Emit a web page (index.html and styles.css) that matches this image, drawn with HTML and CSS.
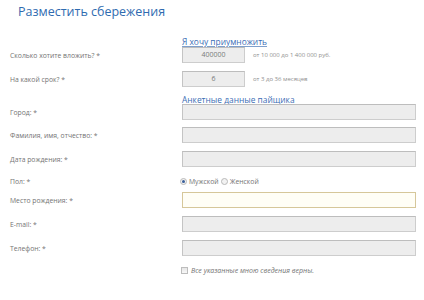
FILE: index.html
```html
<!DOCTYPE html>
<html lang="ru">
<head>
<meta charset="utf-8">
<title>Разместить сбережения</title>
<link rel="stylesheet" href="styles.css">
</head>
<body>
<div class="page">
  <h1 class="title">Разместить сбережения</h1>
  <form class="form">
    <div class="row section-row first"><span class="label"></span><span class="section">Я хочу приумножить</span></div>
    <div class="row"><span class="label">Сколько хотите вложить? *</span><div class="field"><span class="input short">400000</span><span class="hint">от 10 000 до 1 400 000 руб.</span></div></div>
    <div class="row gap8"><span class="label">На какой срок? *</span><div class="field"><span class="input short">6</span><span class="hint">от 3 до 36 месяцев</span></div></div>
    <div class="row section-row sec2"><span class="label"></span><span class="section">Анкетные данные пайщика</span></div>
    <div class="row"><span class="label">Город: *</span><div class="field"><span class="input wide"></span></div></div>
    <div class="row gap7"><span class="label">Фамилия, имя, отчество: *</span><div class="field"><span class="input wide"></span></div></div>
    <div class="row gap8"><span class="label">Дата рождения: *</span><div class="field"><span class="input wide"></span></div></div>
    <div class="row gap8 radio-row"><span class="label">Пол: *</span><div class="field radios"><span class="radio checked"></span><span class="opt">Мужской</span><span class="radio"></span><span class="opt">Женской</span></div></div>
    <div class="row gap5"><span class="label">Место рождения: *</span><div class="field"><span class="input wide focus"></span></div></div>
    <div class="row gap8"><span class="label">E-mail: *</span><div class="field"><span class="input wide"></span></div></div>
    <div class="row gap8"><span class="label">Телефон: *</span><div class="field"><span class="input wide"></span></div></div>
    <div class="row check-row"><span class="label"></span><div class="field"><span class="checkbox"></span><span class="agree">Все указанные мною сведения верны.</span></div></div>
  </form>
</div>
</body>
</html>
```

FILE: styles.css
```css
html, body {
  margin: 0;
  padding: 0;
  background: #ffffff;
}

.page {
  width: 424px;
  height: 300px;
  padding-top: 2px;
  box-sizing: border-box;
  font-family: "Open Sans", "DejaVu Sans", sans-serif;
  overflow: hidden;
}

.title {
  margin: 0 0 0 18px;
  font-size: 12.5px;
  line-height: 20px;
  font-weight: normal;
  color: #2f6bb0;
}

.form {
  display: flex;
  flex-direction: column;
  margin-top: 15px;
  padding-left: 10px;
}

.row {
  display: flex;
  align-items: center;
  height: 16px;
}

.row.gap8 { margin-top: 8px; }
.row.gap7 { margin-top: 7px; }
.row.gap5 { margin-top: 5px; }

.label {
  width: 172px;
  flex: none;
  font-size: 6.8px;
  color: #747474;
  white-space: nowrap;
}

.section-row {
  height: 10px;
}

.sec2 {
  margin-top: 8px;
  margin-bottom: -1px;
}

.section {
  font-size: 8.4px;
  line-height: 10px;
  color: #3b6db5;
  text-decoration: underline;
  text-decoration-color: #7f9fcc;
  white-space: nowrap;
}

.field {
  display: flex;
  align-items: center;
}

.input {
  box-sizing: border-box;
  height: 16px;
  background: #ededed;
  border: 1px solid #cdcdcd;
  border-top-color: #bdbdbd;
  border-left-color: #c4c4c4;
  font-size: 7px;
  line-height: 14px;
  color: #7a7a7a;
  text-align: center;
}

.input.short { width: 63px; }
.input.wide { width: 234px; }

.input.focus {
  background: #fffef6;
  border-color: #d6c79a;
}

.hint {
  margin-left: 8px;
  font-size: 6px;
  color: #8e8e8e;
  white-space: nowrap;
}

.radio-row {
  height: 12px;
}

.radios {
  font-size: 6.8px;
  color: #747474;
}

.radio {
  box-sizing: border-box;
  width: 7px;
  height: 7px;
  border-radius: 50%;
  border: 1px solid #b9b9b9;
  background: #f2f2f2;
  margin-left: -2px;
  margin-right: 2px;
  position: relative;
}

.radio + .opt + .radio {
  margin-left: 2px;
}

.radio.checked::after {
  content: "";
  position: absolute;
  left: 1px;
  top: 1px;
  width: 3px;
  height: 3px;
  border-radius: 50%;
  background: #3a5f9a;
}

.check-row {
  margin-top: 10px;
  height: 8px;
}

.checkbox {
  box-sizing: border-box;
  width: 7px;
  height: 7px;
  border: 1px solid #bdbdbd;
  background: linear-gradient(#e6e6e6, #f8f8f8);
  margin-left: -1px;
  margin-right: 3px;
}

.agree {
  font-size: 7px;
  font-style: italic;
  color: #747474;
  white-space: nowrap;
}
```
